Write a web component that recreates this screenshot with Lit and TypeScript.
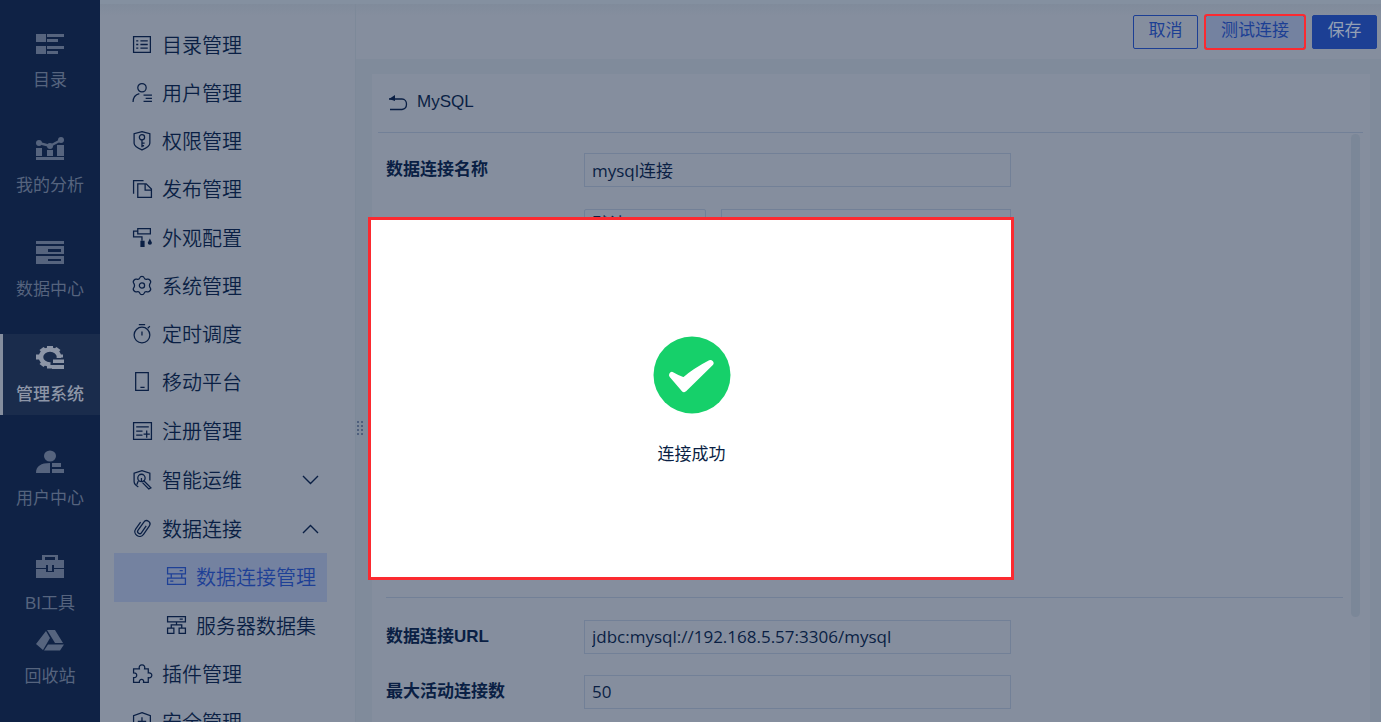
import { LitElement, html, css, svg, nothing } from "lit";
import { customElement } from "lit/decorators.js";
import { classMap } from "lit/directives/class-map.js";

const railIcons: Record<string, unknown> = {
  catalog: svg`<path d="M0 4h10v8H0zM11 4h17v3H11zM11 9h11v3H11zM0 16h10v8H0zM11 16h17v3H11zM11 21h11v3H11z"/>`,
  analysis: svg`<path d="M0 13h6v8H0zM11 15h6v6h-6zM21 10h7v11h-7zM0 22h28v3H0z"/><path d="M3 8l11 3L25 5" fill="none" stroke="currentColor" stroke-width="2.500"/><circle cx="3" cy="8" r="3"/><circle cx="14" cy="11" r="3"/><circle cx="25" cy="5" r="3"/>`,
  data: svg`<path d="M0 2h28v3H0z"/><path fill-rule="evenodd" d="M0 7h28v8H0zM12 10v3h13v-3zM0 17h28v8H0zM12 20v2h13v-2z"/>`,
  system: svg`<ellipse cx="14" cy="13" rx="9" ry="7.500" fill="none" stroke="currentColor" stroke-width="4.500"/><path d="M11 2h6v4h-6zM3.500 6l4-3 4 3-4 4.500zM0 10.500h5v5H0zM3.500 20l4-4 4 3-4 4zM11 20h5v4.500h-5zM20.500 3l4 3-4 4.500-4-4.500zM23 10.500h4v3h-4z"/><path d="M14.500 14H28v14H16v-7h-1.500z" class="gap"/><path d="M17 15.500h11v3.500H17zM16 21h12v4H16z"/>`,
  user: svg`<ellipse cx="14" cy="8" rx="6" ry="5.500"/><path d="M0 25c0-7 5-10 14-10v10zM16 15h9v4h-9zM16 21h12v4H16z"/>`,
  tools: svg`<path fill-rule="evenodd" d="M6 2h16v5h6v8H18v-3h-8v3H0V7h6zM9 4v3h10V4zM12 12h4v6h-4zM0 16h10v3h8v-3h10v9H0z"/>`,
  recycle: svg`<path d="M11 3h8l8 13h-8zM10 4l4 7-7 12-7-6zM12 17.500h16l-4 6H8z"/>`,
};

const menuIcons: Record<string, unknown> = {
  list: svg`<path d="M1.500 2.500h16v15h-16zM4 6.500h2M8 6.500h7M4 10h2M8 10h7M4 13.500h2M8 13.500h7"/>`,
  user: svg`<circle cx="9.500" cy="5.500" r="4"/><path d="M1 19c0-5 2-7 6-8M11 12.500h8M13 15.500h6M11 18.500h8"/>`,
  shield: svg`<path d="M9.500 1.500l7.500 2v9c0 2-3 4.500-7.500 6.500C5 17 2 14.500 2 12.500v-9z"/><circle cx="9.500" cy="7" r="2.500"/><path d="M9.500 9.500v7M9.500 12.500h2.500M9.500 15h2"/>`,
  copy: svg`<path d="M1.500 15V2.500H11M5.500 5.500h8l5 5v8h-13zM12.500 5.500v6h6"/>`,
  paint: svg`<path d="M5.500 1.500h12v5h-12zM5.500 4h-4v5.500h8V13"/><path d="M8 13h4v6H8zM17 11l2 4a2 2 0 1 1-4 0z" fill="currentColor" stroke="none"/>`,
  gear: svg`<path d="M7.500 2.500C8 .8 11 .8 11.500 2.500c.5 1.500 1.500 2 3 1.500 2-.5 4 2 3 3.500-1.200 1.700-1.200 3.300 0 5 1 1.500-1 4-3 3.500-1.500-.5-2.500 0-3 1.500-.5 1.700-3.500 1.700-4 0-.5-1.500-1.500-2-3-1.500-2 .5-4-2-3-3.500 1.200-1.700 1.200-3.300 0-5-1-1.500 1-4 3-3.500 1.500.5 2.500 0 3-1.500z"/><circle cx="9.500" cy="10" r="2.500"/>`,
  timer: svg`<circle cx="9.500" cy="11.500" r="7.500"/><path d="M6.500 1.500h6M9.500 8v4M15 5l2-2"/>`,
  phone: svg`<path d="M3.500 1.500h12v17h-12zM8 15.500h4"/>`,
  register: svg`<path d="M1.500 2.500h17v16h-17zM4 6.500h12M4 10.500h6M4 14.500h6M11 13.500h6M14 10v7"/>`,
  repair: svg`<path d="M6 17C3 15.500 2 14 2 12V4l7.500-2.500L17 4v7"/><circle cx="9" cy="8.500" r="3.500"/><path d="M9 8.500v3M11 11l7 7-2 1-6-6M6 11.500L4.500 15"/>`,
  clip: svg`<g transform="rotate(35 10 10)"><path d="M5 6v8c0 6 9 6 9 0V4.500c0-4.500-6.500-4.500-6.500 0V14c0 2.500 4 2.500 4 0V6"/></g>`,
  server: svg`<path d="M1.500 1.500h17v6h-17zM13 4.500h3M1.500 11.500h17v6h-17zM4 14.500h3M5 7.500v4M15 7.500v4"/>`,
  dataset: svg`<path d="M1.500 1.500h17v5h-17zM13 4h3M10 6.500v3M5 12V9.500h10V12M1.500 12.500h6v5h-6zM12.500 12.500h6v5h-6z"/>`,
  plugin: svg`<path d="M1.500 5.500H7c-1.500-5 6.500-5 5 0h3.500v4c4.500-1 4.500 5.500 0 4.500v4.500H11c1-4-4.500-4-4 0H1.500V14c4 .5 4-5 0-4.500z"/>`,
  safe: svg`<path d="M9.500 1.500l8 3v8c0 2-3 4.500-8 6.500-5-2-8-4.500-8-6.500v-8zM9.500 6v8M5.500 10h8"/>`,
};

interface MenuEntry {
  icon: string;
  text: string;
  arrow?: "up" | "down";
  children?: MenuEntry[];
  current?: boolean;
}

const rail = [
  { icon: "catalog", text: "目录" },
  { icon: "analysis", text: "我的分析" },
  { icon: "data", text: "数据中心" },
  { icon: "system", text: "管理系统", active: true },
  { icon: "user", text: "用户中心" },
  { icon: "tools", text: "BI工具" },
];

const menu: MenuEntry[][] = [
  [
    { icon: "list", text: "目录管理" },
    { icon: "user", text: "用户管理" },
    { icon: "shield", text: "权限管理" },
    { icon: "copy", text: "发布管理" },
  ],
  [
    { icon: "paint", text: "外观配置" },
    { icon: "gear", text: "系统管理" },
    { icon: "timer", text: "定时调度" },
    { icon: "phone", text: "移动平台" },
  ],
  [
    { icon: "register", text: "注册管理" },
    { icon: "repair", text: "智能运维", arrow: "down" },
    {
      icon: "clip",
      text: "数据连接",
      arrow: "up",
      children: [
        { icon: "server", text: "数据连接管理", current: true },
        { icon: "dataset", text: "服务器数据集" },
      ],
    },
    { icon: "plugin", text: "插件管理" },
    { icon: "safe", text: "安全管理" },
  ],
];

@customElement("nav-rail")
class NavRail extends LitElement {
  static styles = css`
    :host { display: flex; flex-direction: column; width: 100px; padding: 20px 0 23px; box-sizing: border-box; background: #0f2245; }
    .group { flex: 1; display: flex; flex-direction: column; justify-content: space-between; }
    .item { display: flex; flex-direction: column; align-items: center; box-sizing: border-box; height: 81px; padding-top: 10px; gap: 11px; border-left: 3px solid transparent; border-right: 3px solid transparent; color: #56647e; font-size: 17px; line-height: 24px; text-decoration: none; white-space: nowrap; }
    .last { height: 75px; padding-top: 3px; gap: 10px; }
    .active { background: #1a2c4c; border-left-color: #858e9e; border-right-color: #1a2c4c; color: #8d96a7; font-weight: 500; }
    svg { width: 28px; height: 28px; fill: currentColor; flex: none; }
    .gap { fill: #1a2c4c; }
  `;
  entry(icon: string, text: string, active = false, last = false) {
    return html`<a href="#" class=${classMap({ item: true, active, last })}>
      <svg viewBox="0 0 28 28" aria-hidden="true">${railIcons[icon]}</svg><span>${text}</span></a>`;
  }
  render() {
    return html`<div class="group">${rail.map((r) => this.entry(r.icon, r.text, r.active))}</div>
      ${this.entry("recycle", "回收站", false, true)}`;
  }
}

@customElement("side-menu")
class SideMenu extends LitElement {
  static styles = css`
    :host { display: flex; flex-direction: column; gap: 1px; width: 256px; box-sizing: border-box; padding: 17px 28px 0 14px; overflow: hidden; border-right: 1px solid #7d8999; background: linear-gradient(#808b9b, #858e9e 12px); }
    .row { display: flex; align-items: center; width: 100%; height: 48px; flex: none; box-sizing: border-box; padding: 0 8px 2px 18px; gap: 9px; border: 0; background: none; color: #0a1f44; font: inherit; font-size: 20px; font-weight: 350; text-decoration: none; text-align: left; white-space: nowrap; }
    .fold, .current { height: 49px; }
    .fold { padding-bottom: 0; }
    .sub { padding-left: 52px; }
    .current { background: #7482a0; color: #1e4096; }
    .icon { width: 21px; height: 21px; flex: none; fill: none; stroke: currentColor; stroke-width: 1.2; }
    .arrow { width: 17px; height: 10px; margin-left: auto; flex: none; fill: none; stroke: currentColor; stroke-width: 1.4; }
  `;
  icon(name: string) {
    return html`<svg class="icon" viewBox="0 0 20 20" aria-hidden="true">${menuIcons[name]}</svg>`;
  }
  entry(e: MenuEntry, sub = false): unknown {
    if (e.arrow) {
      return html`<button class="row fold" aria-expanded=${e.arrow === "up" ? "true" : "false"}>
          ${this.icon(e.icon)}<span>${e.text}</span>
          <svg class="arrow" viewBox="0 0 17 10" aria-hidden="true"><path d=${e.arrow === "up" ? "M1 9l7.500-7.500L16 9" : "M1 1l7.500 7.500L16 1"} /></svg>
        </button>
        ${e.children ? e.children.map((c) => this.entry(c, true)) : nothing}`;
    }
    return html`<a href="#" class=${classMap({ row: true, sub, current: !!e.current })}>${this.icon(e.icon)}<span>${e.text}</span></a>`;
  }
  render() {
    return menu.map((g) => html`<nav>${g.map((e) => this.entry(e))}</nav>`);
  }
}

@customElement("connection-form")
class ConnectionForm extends LitElement {
  static styles = css`
    :host { display: flex; flex-direction: column; min-height: 0; box-sizing: border-box; padding: 0 7px 0 6px; background: #858e9e; color: #0a1f44; overflow: hidden; }
    .title { display: flex; align-items: center; gap: 9px; height: 59px; padding: 0 0 3px 10px; box-sizing: border-box; flex: none; border-bottom: 1px solid #728097; font-size: 17px; }
    .back { display: flex; padding: 0; border: 0; background: none; color: inherit; }
    .back svg { width: 20px; height: 20px; }
    .body { flex: 1; min-height: 0; display: flex; justify-content: space-between; padding: 1px 3px 0 8px; }
    .fields { flex: 1; margin-right: 8px; padding-top: 19px; }
    .section { display: flex; flex-direction: column; gap: 22px; }
    .general { box-sizing: border-box; min-height: 445px; border-bottom: 1px solid #728097; }
    .url { padding-top: 22px; gap: 21px; }
    .line { display: flex; gap: 15px; flex: none; }
    label { width: 183px; line-height: 34px; font-size: 17px; font-weight: 700; }
    input, select { height: 34px; box-sizing: border-box; border: 1px solid #728097; border-radius: 0; background: none; color: inherit; padding: 0 7px 2px; font-family: "Open Sans", "Noto Sans CJK SC", sans-serif; font-size: 17px; outline: 0; }
    .wide { width: 427px; }
    .kind { width: 122px; margin-left: 198px; appearance: none; border-radius: 2px; padding-bottom: 4px; font-family: "Liberation Sans", "Noto Sans CJK SC", sans-serif; }
    .name { width: 290px; }
    .bar { width: 9px; height: 483px; border-radius: 5px; background: #7b8798; }
  `;
  render() {
    return html`<div class="title">
        <button class="back" aria-label="返回"><svg viewBox="0 0 20 20" aria-hidden="true"><path d="M1 7h13c6 0 6 10 0 10.500H2" fill="none" stroke="currentColor" stroke-width="1.300" /><path d="M1 7l6-4v6z" fill="currentColor" /></svg></button>
        <span>MySQL</span>
      </div>
      <div class="body">
        <div class="fields">
          <div class="section general">
            <div class="line"><label for="name">数据连接名称</label><input id="name" class="wide" value="mysql连接" /></div>
            <div class="line"><select class="kind" aria-label="驱动"><option>默认</option></select><input class="name" aria-label="驱动名称" /></div>
          </div>
          <div class="section url">
            <div class="line"><label for="url">数据连接URL</label><input id="url" class="wide" value="jdbc:mysql://192.168.5.57:3306/mysql" /></div>
            <div class="line"><label for="max">最大活动连接数</label><input id="max" class="wide" value="50" /></div>
          </div>
        </div>
        <div class="bar"></div>
      </div>`;
  }
}

@customElement("app-root")
class AppRoot extends LitElement {
  static styles = css`
    :host { display: flex; position: relative; height: 100vh; overflow: hidden; background: #808b9b; font-family: "Liberation Sans", "Noto Sans CJK SC", sans-serif; }
    nav-rail { flex: none; }
    .work { flex: 1; min-width: 0; display: flex; border-top: 4px solid #8490a0; }
    side-menu { flex: none; }
    .grip { width: 7px; flex: none; align-self: center; margin-top: 130px; height: 17px; background: radial-gradient(circle, #4f5f7c 1px, transparent 1px) 0 0 / 4px 4px; }
    .main { flex: 1; min-width: 0; display: flex; flex-direction: column; margin-left: -7px; }
    .head { display: flex; justify-content: flex-end; gap: 7px; padding: 11px 4px 10px; flex: none; background: linear-gradient(#808b9b, #858e9e 12px); }
    .btn { height: 34px; min-width: 65px; box-sizing: border-box; padding: 0 14px 2px; border: 1px solid #1c3f94; border-radius: 2px; background: none; color: #1c3f94; font: inherit; font-size: 17px; line-height: 24px; white-space: nowrap; }
    .test { min-width: 100px; background: #7482a0; outline: 2px solid #fb2a30; outline-offset: -1px; }
    .save { background: #1c3f94; color: #94a0b4; }
    connection-form { flex: 1; margin: 15px 11px 0 16px; }
    .dialog { position: absolute; left: 50%; top: 217px; width: 646px; height: 363px; transform: translateX(-50%); margin: 0; padding: 0 0 0 2px; box-sizing: border-box; border: 3px solid #fb2a30; background: #fff; display: flex; flex-direction: column; align-items: center; color: #0a1f44; font-size: 17px; line-height: 24px; }
    .dialog svg { width: 78px; height: 78px; margin: 116px 0 29px; flex: none; }
    .dialog p { margin: 0; }
  `;
  render() {
    return html`<nav-rail></nav-rail>
      <div class="work">
        <side-menu></side-menu>
        <div class="grip"></div>
        <div class="main">
          <div class="head">
            <button class="btn">取消</button><button class="btn test">测试连接</button><button class="btn save">保存</button>
          </div>
          <connection-form></connection-form>
        </div>
      </div>
      <div class="dialog" role="dialog" aria-label="连接成功">
        <svg viewBox="0 0 78 78" aria-hidden="true"><circle cx="39" cy="39" r="38.500" fill="#16d06a" /><path d="M19 39L31 53L57.500 27Q42 35 31 44.500Q24 42 19 39Z" fill="#fff" stroke="#fff" stroke-width="6" stroke-linejoin="round" /></svg>
        <p>连接成功</p>
      </div>`;
  }
}
